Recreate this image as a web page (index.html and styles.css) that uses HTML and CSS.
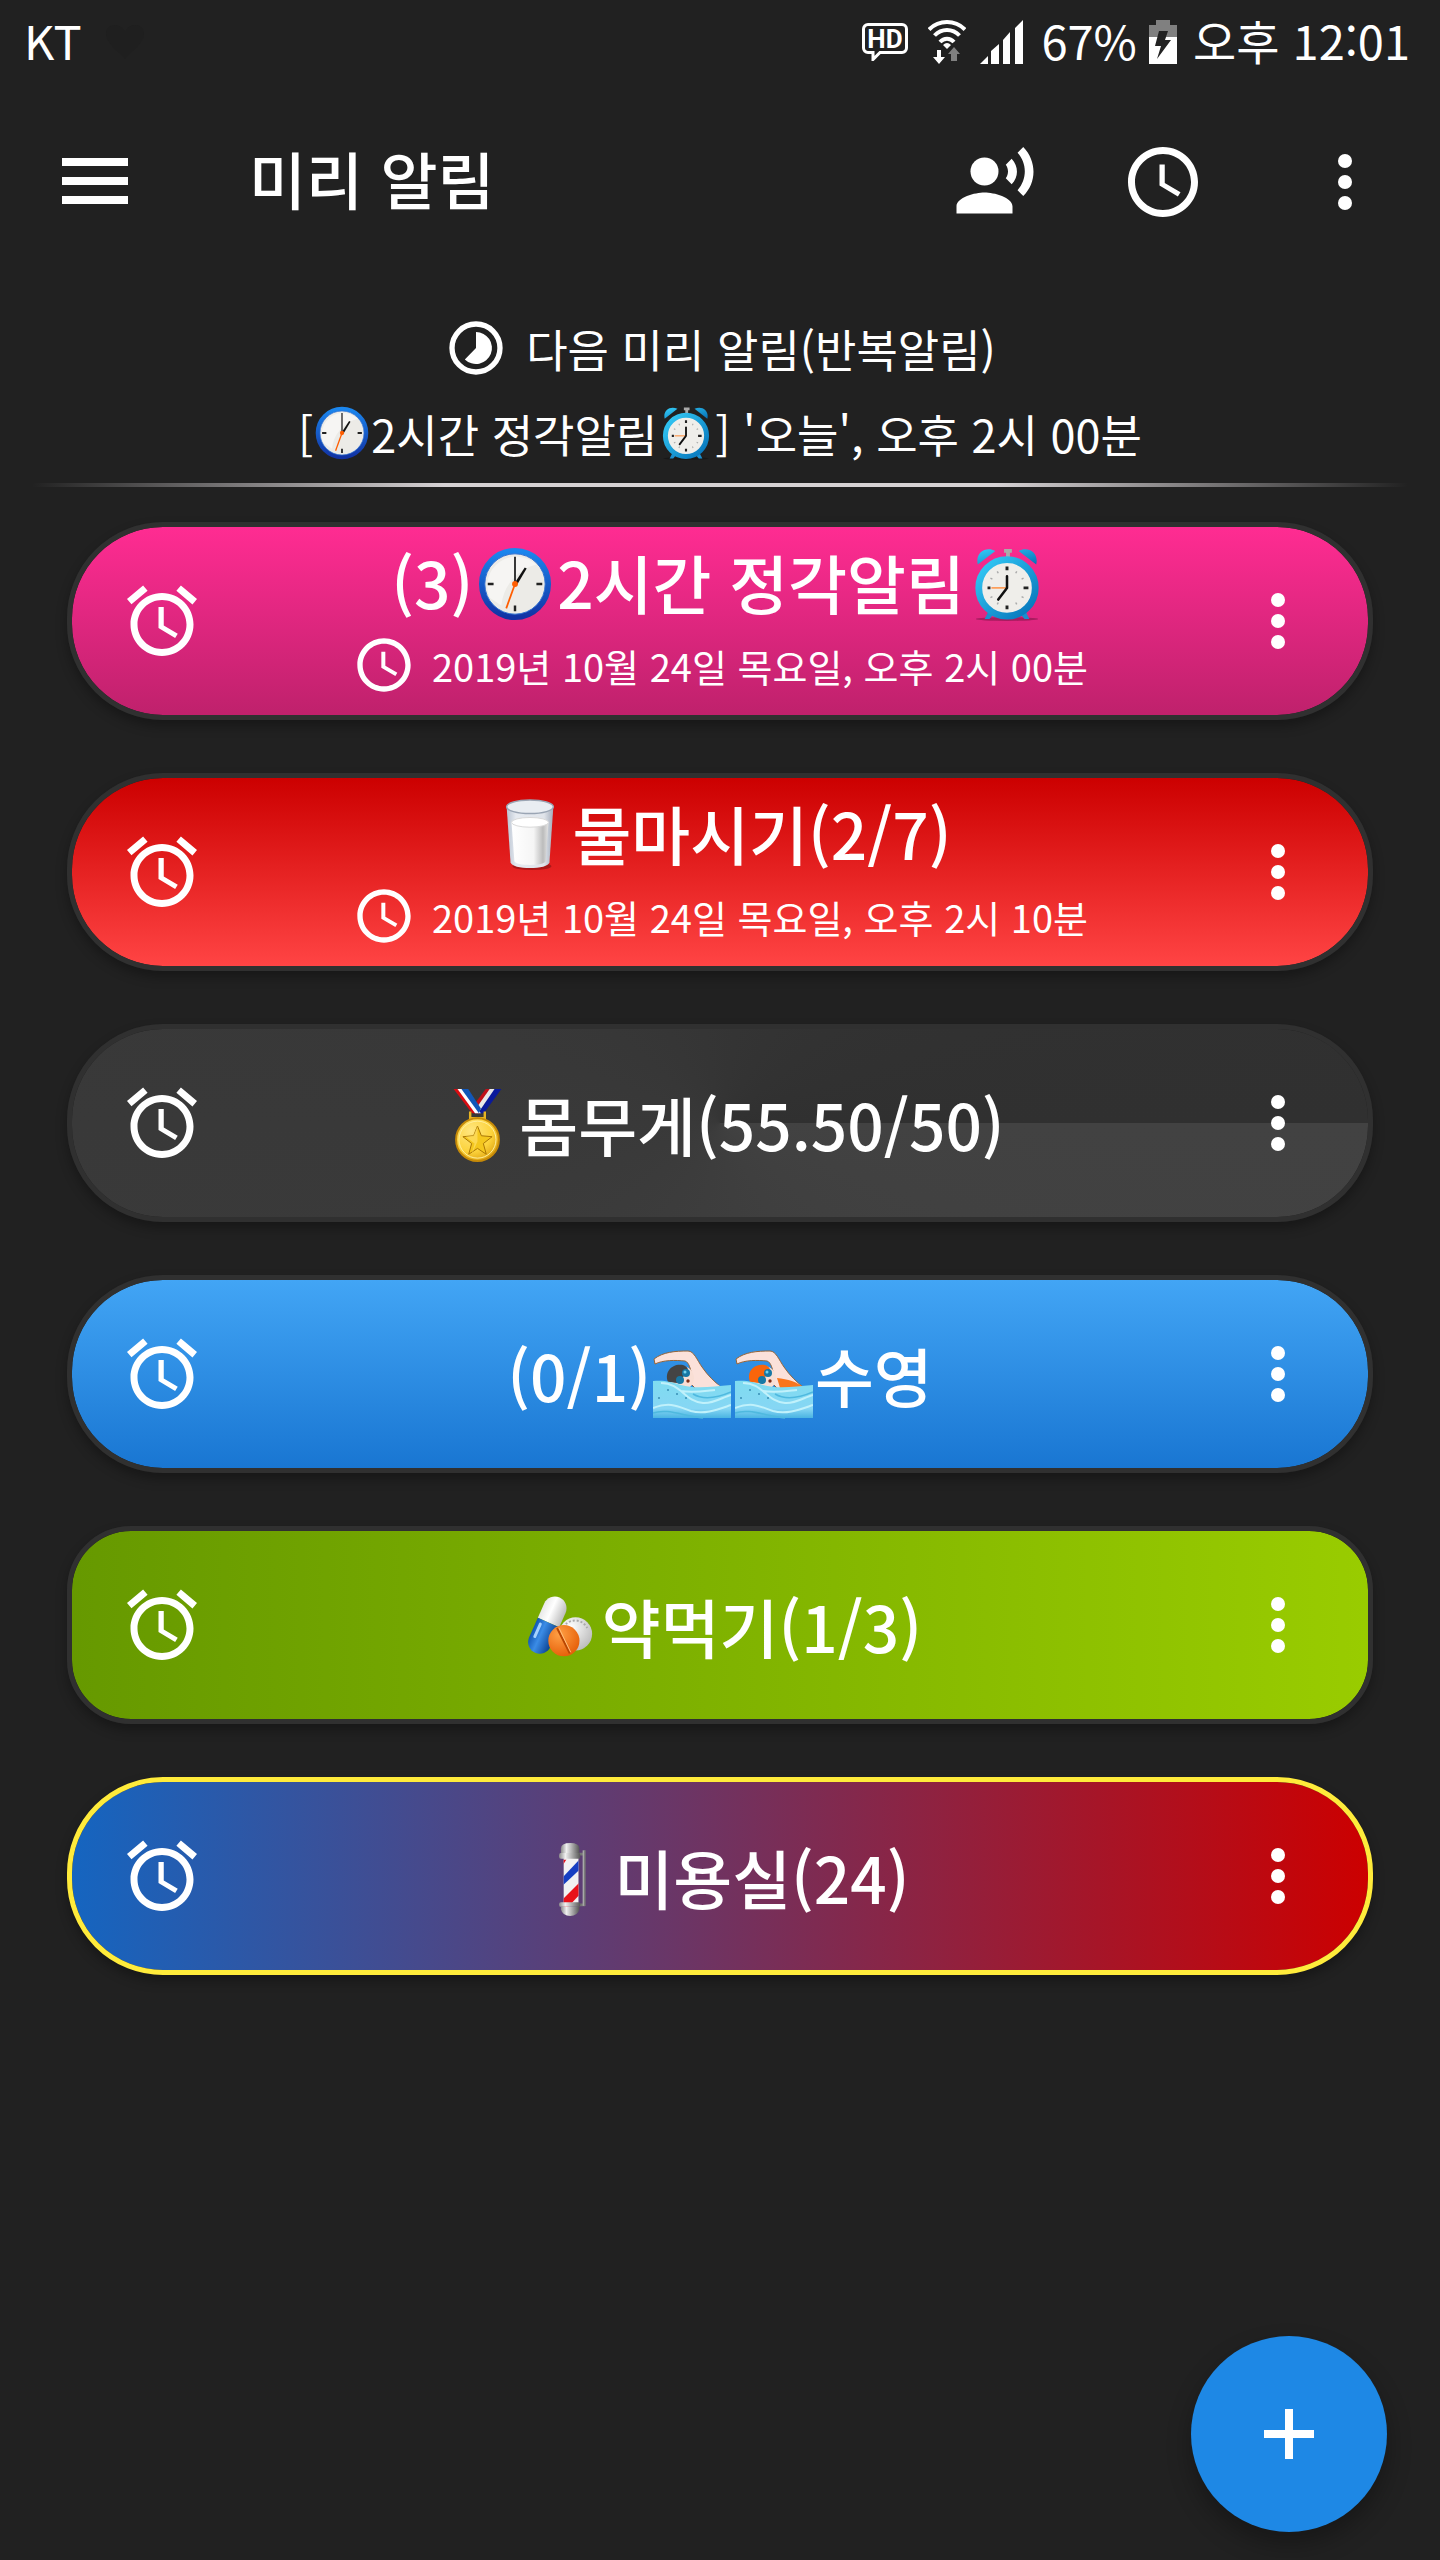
FILE: index.html
```html
<!DOCTYPE html>
<html lang="ko">
<head>
<meta charset="utf-8">
<meta name="viewport" content="width=device-width, initial-scale=1">
<title>미리 알림</title>
<link rel="stylesheet" href="styles.css">
</head>
<body>
<svg class="sprite" aria-hidden="true">
  <defs>
    <linearGradient id="g-rim" x1="0" y1="0" x2="0" y2="1"><stop offset="0" stop-color="#1b86ee"/><stop offset="1" stop-color="#1233a4"/></linearGradient>
    <linearGradient id="g-cyan" x1="0" y1="0" x2="1" y2="1"><stop offset="0" stop-color="#35cdf8"/><stop offset="1" stop-color="#0471b8"/></linearGradient>
    <linearGradient id="g-glass" x1="0" y1="0" x2="1" y2="0"><stop offset="0" stop-color="#b9c2d0"/><stop offset=".2" stop-color="#e6eaf0"/><stop offset=".8" stop-color="#e0e4ea"/><stop offset="1" stop-color="#a3acbb"/></linearGradient>
    <linearGradient id="g-milk" x1="0" y1="0" x2="1" y2="0"><stop offset="0" stop-color="#ffffff"/><stop offset=".6" stop-color="#f5f5f5"/><stop offset=".85" stop-color="#bcbcbc"/><stop offset="1" stop-color="#e4e4e4"/></linearGradient>
    <radialGradient id="g-gold" cx=".35" cy=".3" r=".8"><stop offset="0" stop-color="#ffe680"/><stop offset=".6" stop-color="#fcd33c"/><stop offset="1" stop-color="#d89a08"/></radialGradient>
    <linearGradient id="g-water" x1="0" y1="0" x2="0" y2="1"><stop offset="0" stop-color="#7fdcf0"/><stop offset=".75" stop-color="#86d6f4"/><stop offset="1" stop-color="#4ab4e2"/></linearGradient>
    <linearGradient id="g-metal" x1="0" y1="0" x2="1" y2="0"><stop offset="0" stop-color="#8a8a8a"/><stop offset=".3" stop-color="#f0f0f0"/><stop offset="1" stop-color="#555"/></linearGradient>
    <radialGradient id="g-orange" cx=".35" cy=".3" r=".8"><stop offset="0" stop-color="#ffa045"/><stop offset="1" stop-color="#e45a04"/></radialGradient>
    <radialGradient id="g-tablet" cx=".35" cy=".3" r=".8"><stop offset="0" stop-color="#ffffff"/><stop offset="1" stop-color="#b8b8b8"/></radialGradient>
    <linearGradient id="g-capblue" x1="0" y1="0" x2="1" y2="0"><stop offset="0" stop-color="#1258b4"/><stop offset=".4" stop-color="#3b8ce6"/><stop offset="1" stop-color="#0b4291"/></linearGradient>
    <linearGradient id="g-capwhite" x1="0" y1="0" x2="1" y2="0"><stop offset="0" stop-color="#e8e8e8"/><stop offset=".4" stop-color="#ffffff"/><stop offset="1" stop-color="#bdbdbd"/></linearGradient>
    <clipPath id="c-pole"><rect x="29" y="19" width="16" height="53"/></clipPath>
  </defs>

  <symbol id="i-alarm" viewBox="0 0 24 24"><path d="M22 5.72l-4.6-3.86-1.29 1.53 4.6 3.86L22 5.72zM7.88 3.39L6.6 1.86 2 5.71l1.29 1.53 4.59-3.85zM12.5 8H11v6l4.75 2.85.75-1.23-4-2.37V8zM12 4c-4.97 0-9 4.03-9 9s4.02 9 9 9c4.97 0 9-4.03 9-9s-4.03-9-9-9zm0 16c-3.87 0-7-3.13-7-7s3.13-7 7-7 7 3.13 7 7-3.13 7-7 7z"/></symbol>
  <symbol id="i-more" viewBox="0 0 24 24"><circle cx="12" cy="6" r="2"/><circle cx="12" cy="12" r="2"/><circle cx="12" cy="18" r="2"/></symbol>
  <symbol id="i-clock" viewBox="0 0 24 24"><path d="M11.99 2C6.47 2 2 6.48 2 12s4.47 10 9.99 10C17.52 22 22 17.52 22 12S17.52 2 11.99 2zM12 20c-4.42 0-8-3.58-8-8s3.58-8 8-8 8 3.58 8 8-3.58 8-8 8zm.5-13H11v6l5.25 3.15.75-1.23-4.5-2.67z"/></symbol>

  <symbol id="e-clock" viewBox="0 0 76 76">
    <circle cx="38" cy="38" r="34" fill="#ecebe7" stroke="url(#g-rim)" stroke-width="6"/>
    <circle cx="38" cy="38" r="31" fill="none" stroke="#2f6fd0" stroke-width="1"/>
    <path d="M12 52A30 30 0 0 1 60 18 48 48 0 0 0 24 60z" fill="#fff" opacity=".5"/>
    <path d="M10 38h6M60 38h6M38 60v6" stroke="#222" stroke-width="2.5"/>
    <path d="M38 38V10" stroke="#333" stroke-width="2"/>
    <path d="M37 38l11-17 2 1-10 17z" fill="#111"/>
    <path d="M38 38l-9 25" stroke="#ff5d00" stroke-width="1.8"/>
    <circle cx="38" cy="38" r="3" fill="#ff5d00"/>
  </symbol>
  <symbol id="e-alarm" viewBox="0 0 76 76">
    <ellipse cx="38" cy="74" rx="32" ry="2" fill="#000" opacity=".25"/>
    <path d="M20 64l-5 10h5l5-6zM56 64l5 10h-5l-5-6z" fill="#1b8fce"/>
    <path d="M35 2h8v4h-2v6h-4V6h-2z" fill="#aaa"/>
    <path d="M8 18C5 6 16-1 26 4zM68 18C71 6 60-1 50 4z" fill="url(#g-cyan)"/>
    <circle cx="38" cy="42" r="29" fill="#efeeea" stroke="url(#g-cyan)" stroke-width="7"/>
    <path d="M18 42h3M55 42h5M38 20v4M38 60v4" stroke="#222" stroke-width="3"/>
    <path d="M28 25l1 2M48 25l-1 2M55 32l-2 1M55 52l-2-1M48 59l-1-2M28 59l1-2M21 32l2 1M21 52l2-1" stroke="#aaa" stroke-width="1.5"/>
    <path d="M22 42h16" stroke="#ff9549" stroke-width="1.6"/>
    <path d="M38 42V30M38 42l-9 12" fill="none" stroke="#111" stroke-width="2.6" stroke-linecap="round"/>
  </symbol>
  <symbol id="e-glass" viewBox="0 0 76 76">
    <ellipse cx="40" cy="70" rx="20" ry="4" fill="#000" opacity=".25"/>
    <path d="M14 9l4 57c1 8 39 8 40 0l4-57z" fill="url(#g-glass)"/>
    <ellipse cx="38" cy="9" rx="24" ry="7" fill="#e9edf2" stroke="#9aa5b4" stroke-width="1.5"/>
    <path d="M19 25l3 40c1 5 31 5 32 0l3-40z" fill="url(#g-milk)"/>
    <ellipse cx="38" cy="25" rx="19" ry="5" fill="#fff" stroke="#d8d8d8"/>
  </symbol>
  <symbol id="e-medal" viewBox="0 0 76 76">
    <path d="M45 25L63 0h-8L39 25z" fill="#0a1a9c"/><path d="M39 25L56 0h-6L36 20z" fill="#e8e8e8"/><path d="M37 20L51 0h-4L35 16z" fill="#c01018"/>
    <path d="M14 0h8l19 25h-8z" fill="#d80d12"/><path d="M18 0h5l19 25h-6z" fill="#fff"/><path d="M22 0h7l13 20-2 5z" fill="#1157b8"/>
    <path d="M31 23v7h15v-7" fill="none" stroke="#e7b422" stroke-width="2.5"/>
    <circle cx="38.500" cy="52" r="22" fill="url(#g-gold)" stroke="#c68a08" stroke-width="2"/>
    <circle cx="38.500" cy="52" r="19" fill="none" stroke="#fff0a0"/>
    <path d="M38.500 38l4 10 11 1-9 7 3 11-9-6-9 6 3-11-9-7 11-1z" fill="#f4c71e" stroke="#a87404" stroke-width="1"/>
    <path d="M38.500 38v16l-6 13 3-11-9-7 8-1z" fill="#ffe066" opacity=".7"/>
  </symbol>
  <symbol id="e-swimmer" viewBox="0 0 78 68">
    <path d="M1 9C10 2 22 1 35 1c6 0 9 9 14 16 6 9 13 15 20 21l-24 3-8-8 2-6C38 20 36 12 32 11 22 10 10 10 2 14z" fill="#fbe1da" stroke="#94643a" stroke-width="1"/>
    <path class="suit" d="M42 28c11 1 20 4 26 9l-22 4z"/>
    <circle cx="29" cy="28" r="12" fill="#f9ded4"/>
    <path class="cap" d="M24 33l-9-1C11 22 19 13 30 15c7 2 6 8 1 11z"/>
    <circle cx="33" cy="23" r="4" fill="#1778a5"/><circle cx="27" cy="30" r="4" fill="#1778a5"/>
    <circle cx="32" cy="22" r="1.500" fill="#76d2ec"/><circle cx="35" cy="31" r="1.700" fill="#7d2d18"/>
    <path d="M0 31c12-1 18 1 28 4 14 4 30 2 50 0v33H0z" fill="url(#g-water)"/>
    <path d="M8 33c20 0 24 19 42 20 10 1 20-6 28-8M0 58c18-7 26-1 38 3 14 4 28-2 40-6M28 41c12 2 24 0 34-1" fill="none" stroke="#c0f1fb" stroke-width="2"/>
    <path d="M0 63c14-5 30 3 50 5M40 44c10 6 24 4 38-2" fill="none" stroke="#4fb9df" stroke-width="1.500"/>
    <circle cx="15" cy="40" r="1" fill="#378eb4"/><circle cx="24" cy="44" r="1" fill="#378eb4"/><circle cx="6" cy="48" r="1" fill="#378eb4"/><circle cx="33" cy="48" r="1" fill="#378eb4"/>
  </symbol>
  <symbol id="e-pills" viewBox="0 0 76 76">
    <circle cx="54" cy="44" r="17" fill="url(#g-tablet)"/>
    <path d="M44 34a14 14 0 0 1 22 4" fill="none" stroke="#a9a9a9" stroke-width="2" stroke-dasharray="2 2"/>
    <g transform="rotate(24 25 35)"><path d="M13 32V16a12 12 0 0 1 24 0v16z" fill="url(#g-capwhite)"/><path d="M13 32h24v22a12 12 0 0 1-24 0z" fill="url(#g-capblue)"/><path d="M18 37v14" stroke="#a4d2ff" stroke-width="3" stroke-linecap="round"/></g>
    <circle cx="42" cy="51" r="16" fill="url(#g-orange)"/>
    <path d="M35 38l13 26" stroke="#b84602" stroke-width="2"/><path d="M37 38l12 25" stroke="#ffc080"/>
  </symbol>
  <symbol id="e-barber" viewBox="0 0 76 80">
    <path d="M44 13h8M44 68h8" stroke="#777" stroke-width="3"/>
    <path d="M51 9v60" stroke="#a8a8a8" stroke-width="3"/><path d="M52 9v60" stroke="#555" stroke-width="1"/>
    <rect x="29" y="17" width="16" height="51" fill="#f2f2f2"/>
    <g clip-path="url(#c-pole)"><path d="M28 38l18-19v11L28 47z" fill="#173fc2"/><path d="M28 62l18-18v13L33 71h-5z" fill="#e8121a"/><path d="M28 19h4l-4 6z" fill="#e8121a"/></g>
    <path d="M26 13V7q0-6 10-6t10 6v6z" fill="url(#g-metal)"/><rect x="24" y="12" width="23" height="6" rx="2" fill="url(#g-metal)"/>
    <rect x="24" y="65" width="23" height="5" rx="2" fill="url(#g-metal)"/><path d="M26 70h20v3q-2 7-10 7t-10-7z" fill="url(#g-metal)"/>
  </symbol>
</svg>

<div class="status">
  <div class="status-side">
    <span>KT</span>
    <svg class="heart" viewBox="0 0 38 34" aria-hidden="true"><path d="M19 34C12 26 0 18 0 9 0-2 15-3 19 7 23-3 38-2 38 9c0 9-12 17-19 25z"/></svg>
  </div>
  <div class="status-side">
    <svg class="hd" viewBox="0 0 46 38" role="img" aria-label="HD">
      <path d="M6 1.500h34a4.500 4.500 0 0 1 4.500 4.500v19a4.500 4.500 0 0 1-4.500 4.500H18l-7 7v-7H6A4.500 4.500 0 0 1 1.500 25V6A4.500 4.500 0 0 1 6 1.500z"/>
      <text x="23" y="25" text-anchor="middle">HD</text>
    </svg>
    <svg class="wifi" viewBox="0 0 38 44" aria-hidden="true">
      <g fill="none" stroke="#fff" stroke-width="4"><path d="M1 9.500C11-.5 27-.5 37 9.500M6.500 15.500c7-7.500 18-7.500 25 0M12 22c4-4.500 10-4.500 14 0"/></g>
      <path d="M19 29l-4-4q4-4 8 0zM9 30h4v7h4l-6 7-6-7h4z" fill="#fff"/><path d="M26 27l6 7h-3v7h-6v-7h-3z" fill="#808080"/>
    </svg>
    <svg class="signal" viewBox="0 0 43 44" aria-hidden="true"><path d="M0 44l8-8v8zM11 44V31l8-7v20zM23 44V20l7-8v32zM35 44V8l8-8v44z"/></svg>
    <span>67%</span>
    <svg class="battery" viewBox="0 0 28 44" aria-hidden="true"><path d="M0 17V5h7V0h14v5h7v12z" fill="#808080"/><path d="M0 17h28v27H0z" fill="#fff"/><path d="M10 11h9l-3 9h6L8 39l4-13H6z" fill="#222"/></svg>
    <span>오후 12:01</span>
  </div>
</div>

<header class="appbar">
  <button class="icon-btn" type="button" aria-label="메뉴"><svg viewBox="0 0 66 66"><path d="M0 9h66v8H0zM0 28h66v8H0zM0 47h66v8H0z"/></svg></button>
  <h1>미리 알림</h1>
  <div class="actions">
    <button class="icon-btn" type="button" aria-label="음성 알림"><svg viewBox="0 0 24 24"><circle cx="9" cy="9" r="4"/><path d="M9 15c-2.670 0-8 1.340-8 4v2h16v-2c0-2.660-5.330-4-8-4zM16.760 5.360l-1.680 1.690c.84 1.180.84 2.710 0 3.890l1.680 1.690c2.020-2.020 2.020-5.070 0-7.270zM20.070 2l-1.630 1.630c2.770 3.020 2.770 7.560 0 10.740L20.070 16c3.900-3.890 3.910-9.950 0-14z"/></svg></button>
    <button class="icon-btn" type="button" aria-label="시간"><svg><use href="#i-clock"/></svg></button>
    <button class="icon-btn overflow" type="button" aria-label="더보기"><svg><use href="#i-more"/></svg></button>
  </div>
</header>

<main>
  <section class="next">
    <p class="next-head"><svg class="small-icon" viewBox="0 0 24 24" aria-hidden="true"><circle cx="12" cy="12" r="9" fill="none" stroke="#fff" stroke-width="2"/><path d="M12 6a6 6 0 1 1-4.200 10.300L12 12z"/></svg><span>다음 미리 알림(반복알림)</span></p>
    <p class="next-text"><span>[</span><svg class="emoji"><use href="#e-clock"/></svg><span>2시간 정각알림</span><svg class="emoji"><use href="#e-alarm"/></svg><span>] '오늘', 오후 2시 00분</span></p>
  </section>
  <hr class="divider">

  <ul class="list">
    <li class="card pink">
      <button class="icon-btn" type="button" aria-label="알람"><svg><use href="#i-alarm"/></svg></button>
      <div class="body">
        <h2><span>(3)</span><svg class="emoji"><use href="#e-clock"/></svg><span>2시간 정각알림</span><svg class="emoji"><use href="#e-alarm"/></svg></h2>
        <p><svg class="small-icon"><use href="#i-clock"/></svg><span>2019년 10월 24일 목요일, 오후 2시 00분</span></p>
      </div>
      <button class="icon-btn" type="button" aria-label="더보기"><svg><use href="#i-more"/></svg></button>
    </li>
    <li class="card red">
      <button class="icon-btn" type="button" aria-label="알람"><svg><use href="#i-alarm"/></svg></button>
      <div class="body">
        <h2><svg class="emoji"><use href="#e-glass"/></svg><span>물마시기(2/7)</span></h2>
        <p><svg class="small-icon"><use href="#i-clock"/></svg><span>2019년 10월 24일 목요일, 오후 2시 10분</span></p>
      </div>
      <button class="icon-btn" type="button" aria-label="더보기"><svg><use href="#i-more"/></svg></button>
    </li>
    <li class="card gray">
      <button class="icon-btn" type="button" aria-label="알람"><svg><use href="#i-alarm"/></svg></button>
      <div class="body"><h2><svg class="emoji"><use href="#e-medal"/></svg><span>몸무게(55.50/50)</span></h2></div>
      <button class="icon-btn" type="button" aria-label="더보기"><svg><use href="#i-more"/></svg></button>
    </li>
    <li class="card blue">
      <button class="icon-btn" type="button" aria-label="알람"><svg><use href="#i-alarm"/></svg></button>
      <div class="body"><h2><span>(0/1)</span><svg class="emoji man"><use href="#e-swimmer"/></svg><svg class="emoji woman"><use href="#e-swimmer"/></svg><span>수영</span></h2></div>
      <button class="icon-btn" type="button" aria-label="더보기"><svg><use href="#i-more"/></svg></button>
    </li>
    <li class="card green">
      <button class="icon-btn" type="button" aria-label="알람"><svg><use href="#i-alarm"/></svg></button>
      <div class="body"><h2><svg class="emoji"><use href="#e-pills"/></svg><span>약먹기(1/3)</span></h2></div>
      <button class="icon-btn" type="button" aria-label="더보기"><svg><use href="#i-more"/></svg></button>
    </li>
    <li class="card mixed">
      <button class="icon-btn" type="button" aria-label="알람"><svg><use href="#i-alarm"/></svg></button>
      <div class="body"><h2><svg class="emoji"><use href="#e-barber"/></svg><span>미용실(24)</span></h2></div>
      <button class="icon-btn" type="button" aria-label="더보기"><svg><use href="#i-more"/></svg></button>
    </li>
  </ul>
</main>

<button class="fab" type="button" aria-label="추가"><svg viewBox="0 0 50 50"><path d="M21 0h8v21h21v8H29v21h-8V29H0v-8h21z"/></svg></button>
</body>
</html>
```
FILE: styles.css
```css
* {
  box-sizing: border-box;
}

body {
  margin: 0;
  min-height: 100vh;
  background: #212121;
  color: #fff;
  font-family: "Noto Sans CJK KR", sans-serif;
}

h1,
h2,
p,
ul {
  margin: 0;
  padding: 0;
  font-weight: 400;
}

svg {
  display: block;
  flex: none;
  fill: #fff;
}

.sprite {
  position: absolute;
  width: 0;
  height: 0;
}

.status {
  display: flex;
  justify-content: space-between;
  align-items: center;
  height: 84px;
  padding: 0 30px 0 24px;
  font-size: 47px;
  line-height: 80px;
}

.status-side {
  display: flex;
  align-items: center;
}

.status-side span {
  height: 84px;
}

.status-side .heart {
  width: 38px;
  height: 34px;
  margin-left: 24px;
  fill: #1f1f1f;
}

.hd {
  width: 46px;
  height: 38px;
  margin-right: 20px;
}

.hd path {
  fill: none;
  stroke: #fff;
  stroke-width: 3;
}

.hd text {
  font: 700 26px Roboto, sans-serif;
}

.wifi {
  width: 38px;
  height: 44px;
  margin-right: 14px;
}

.signal {
  width: 43px;
  height: 44px;
  margin-right: 18px;
}

.battery {
  width: 28px;
  height: 44px;
  margin: 0 16px 0 12px;
}

.icon-btn {
  display: flex;
  flex: none;
  align-items: center;
  justify-content: center;
  width: 84px;
  height: 84px;
  padding: 0;
  border: 0;
  background: none;
  cursor: pointer;
}

.icon-btn svg {
  width: 84px;
  height: 84px;
}

.appbar {
  display: flex;
  align-items: center;
  height: 196px;
  padding: 0 53px;
}

.appbar > .icon-btn svg {
  width: 66px;
  height: 66px;
}

.appbar h1 {
  flex: 1;
  margin-left: 112px;
  padding-bottom: 8px;
  font-size: 62px;
  font-weight: 500;
  line-height: 96px;
}

.actions {
  display: flex;
  gap: 84px;
}

.overflow {
  margin-left: 14px;
}

.next {
  padding-top: 26px;
  font-size: 45px;
}

.next-head,
.next-text,
.body h2,
.body p {
  display: flex;
  align-items: center;
  justify-content: center;
  white-space: pre;
}

.next-head {
  gap: 18px;
  height: 84px;
}

.next-text {
  height: 86px;
}

.small-icon {
  width: 64px;
  height: 64px;
}

.next .emoji {
  width: 54px;
  height: 54px;
  margin: 0 2px;
}

.divider {
  height: 4px;
  margin: 7px 32px 35px;
  border: 0;
  background: linear-gradient(90deg, transparent, #d6d2d4 30%, #d6d2d4 70%, transparent);
}

.list {
  display: grid;
  gap: 53px;
  padding: 0 67px;
  list-style: none;
}

.card {
  display: flex;
  align-items: center;
  height: 198px;
  padding: 0 48px;
  border: 5px solid #303030;
  border-radius: 96px;
  box-shadow: 0 6px 12px rgba(0, 0, 0, 0.3);
}

.body {
  flex: 1;
}

.body h2 {
  height: 84px;
  font-size: 64px;
  font-weight: 500;
  line-height: 84px;
}

.body p {
  gap: 16px;
  height: 80px;
  padding-top: 4px;
  font-size: 38px;
}

.body .emoji {
  width: 78px;
  height: 74px;
  margin: 6px 3px 0;
}

.pink {
  background: linear-gradient(#ff2c92, #bf216c) padding-box;
}

.red {
  background: linear-gradient(#cc0000, #ff4444) padding-box;
}

.gray {
  background: conic-gradient(from 90deg, #424242, #303030) padding-box;
}

.blue {
  background: linear-gradient(#42a5f5, #1976d2) padding-box;
}

.green {
  border-radius: 64px;
  background: linear-gradient(90deg, #669900, #99cc00) padding-box;
}

.mixed {
  border-color: #ffeb3b;
  background: linear-gradient(90deg, #1565c0, #cc0000) padding-box;
}

.blue .emoji {
  margin: 20px 2px 0;
}

.man {
  --cap: #444;
  --suit: #fbe1da;
}

.woman {
  --cap: #f9650b;
  --suit: #f9761d;
}

.cap {
  fill: var(--cap);
}

.suit {
  fill: var(--suit);
}

.fab {
  position: fixed;
  right: 53px;
  bottom: 28px;
  display: flex;
  align-items: center;
  justify-content: center;
  width: 196px;
  height: 196px;
  padding: 0;
  border: 0;
  border-radius: 50%;
  background: #1e88e5;
  box-shadow: 0 12px 24px rgba(0, 0, 0, 0.3);
  cursor: pointer;
}

.fab svg {
  width: 50px;
  height: 50px;
}
```
